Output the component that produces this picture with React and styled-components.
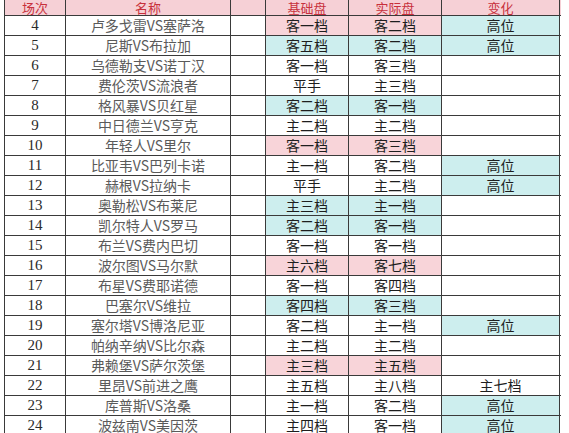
import React from "react";
import styled, { createGlobalStyle } from "styled-components";

const GlobalStyle = createGlobalStyle`
  html, body {
    margin: 0;
    padding: 0;
    background: #ffffff;
  }
  body {
    font-family: "Noto Sans CJK SC", "Noto Sans", sans-serif;
  }
`;

// row tints used in the sheet
const tones = {
  pink: "#f8d4d9",
  cyan: "#cdeeee",
  none: "#ffffff",
};

const rows = [
  { no: 4, name: "卢多戈雷VS塞萨洛", base: "客一档", actual: "客二档", tone: "pink", change: "高位", changeTone: "cyan" },
  { no: 5, name: "尼斯VS布拉加", base: "客五档", actual: "客二档", tone: "cyan", change: "高位", changeTone: "cyan" },
  { no: 6, name: "乌德勒支VS诺丁汉", base: "客一档", actual: "客三档", tone: "none" },
  { no: 7, name: "费伦茨VS流浪者", base: "平手", actual: "主三档", tone: "none" },
  { no: 8, name: "格风暴VS贝红星", base: "客二档", actual: "客一档", tone: "cyan" },
  { no: 9, name: "中日德兰VS亨克", base: "主二档", actual: "主二档", tone: "none" },
  { no: 10, name: "年轻人VS里尔", base: "客一档", actual: "客三档", tone: "pink" },
  { no: 11, name: "比亚韦VS巴列卡诺", base: "主一档", actual: "客二档", tone: "none", change: "高位", changeTone: "cyan" },
  { no: 12, name: "赫根VS拉纳卡", base: "平手", actual: "主二档", tone: "none", change: "高位", changeTone: "cyan" },
  { no: 13, name: "奥勒松VS布莱尼", base: "主三档", actual: "主一档", tone: "cyan" },
  { no: 14, name: "凯尔特人VS罗马", base: "客二档", actual: "客一档", tone: "cyan" },
  { no: 15, name: "布兰VS费内巴切", base: "客一档", actual: "客一档", tone: "none" },
  { no: 16, name: "波尔图VS马尔默", base: "主六档", actual: "客七档", tone: "pink" },
  { no: 17, name: "布星VS费耶诺德", base: "客一档", actual: "客四档", tone: "none" },
  { no: 18, name: "巴塞尔VS维拉", base: "客四档", actual: "客三档", tone: "cyan" },
  { no: 19, name: "塞尔塔VS博洛尼亚", base: "客二档", actual: "主一档", tone: "none", change: "高位", changeTone: "cyan" },
  { no: 20, name: "帕纳辛纳VS比尔森", base: "主二档", actual: "主二档", tone: "none" },
  { no: 21, name: "弗赖堡VS萨尔茨堡", base: "主三档", actual: "主五档", tone: "pink" },
  { no: 22, name: "里昂VS前进之鹰", base: "主五档", actual: "主八档", tone: "none", change: "主七档", changeTone: "none" },
  { no: 23, name: "库普斯VS洛桑", base: "主一档", actual: "客二档", tone: "none", change: "高位", changeTone: "cyan" },
  { no: 24, name: "波兹南VS美因茨", base: "主四档", actual: "客一档", tone: "none", change: "高位", changeTone: "cyan" },
];

export default function App() {
  return (
    <>
      <GlobalStyle />
      <Sheet>
        <HeadRow>
          <HeadCell>场次</HeadCell>
          <HeadCell>名称</HeadCell>
          <HeadCell />
          <HeadCell>基础盘</HeadCell>
          <HeadCell>实际盘</HeadCell>
          <HeadCell>变化</HeadCell>
        </HeadRow>
        {rows.map((r) => (
          <Row key={r.no}>
            <NumCell>{r.no}</NumCell>
            <NameCell>{r.name}</NameCell>
            <Cell />
            <Cell $tone={r.tone}>{r.base}</Cell>
            <Cell $tone={r.tone}>{r.actual}</Cell>
            <Cell $tone={r.changeTone || "none"}>{r.change || ""}</Cell>
          </Row>
        ))}
      </Sheet>
    </>
  );
}

const columns = "61px 165px 35px 83px 93px 118px";

const Sheet = styled.div`
  margin-left: 4px;
  width: 556px;
  height: 433px;
  overflow: hidden;
  display: flex;
  flex-direction: column;
  border-left: 1px solid #3a3a3a;
`;

const HeadRow = styled.div`
  display: grid;
  grid-template-columns: ${columns};
  height: 15px;
  flex: none;
  background: #f6d0d6;
  border-bottom: 1px solid #3a3a3a;
`;

const HeadCell = styled.div`
  border-right: 1px solid #3a3a3a;
  color: #c8303c;
  font-size: 13px;
  line-height: 15px;
  text-align: center;
  white-space: nowrap;
`;

const Row = styled.div`
  display: grid;
  grid-template-columns: ${columns};
  height: 19px;
  flex: none;
  border-bottom: 1px solid #3a3a3a;
`;

const Cell = styled.div`
  border-right: 1px solid #3a3a3a;
  background: ${(p) => tones[p.$tone] || "#ffffff"};
  color: #1e1e1e;
  font-size: 14px;
  line-height: 19px;
  text-align: center;
  white-space: nowrap;
  overflow: hidden;
`;

const NumCell = styled(Cell)`
  font-family: "Liberation Serif", "DejaVu Serif", serif;
  font-size: 15px;
  color: #2a2a2a;
`;

const NameCell = styled(Cell)`
  color: #5a5a5a;
  font-size: 14px;
`;
